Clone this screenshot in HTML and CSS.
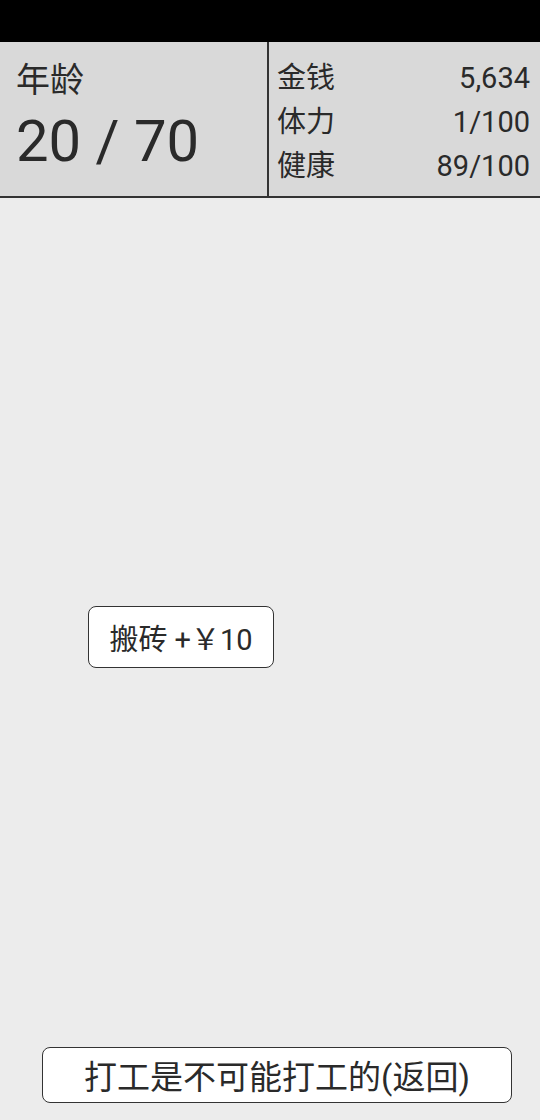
FILE: index.html
```html
<!DOCTYPE html>
<html lang="zh">
<head>
    <meta charset="UTF-8">
    <meta name="viewport" content="width=device-width, initial-scale=1.0">
    <title>打工</title>
    <link rel="stylesheet" href="styles.css">
</head>
<body>
    <div class="top-bar"></div>
    <div class="status">
        <div class="age-cell">
            <div class="age-label">年龄</div>
            <div class="age-value">20 / 70</div>
        </div>
        <div class="stats-cell">
            <div class="stat-row"><span>金钱</span><span>5,634</span></div>
            <div class="stat-row"><span>体力</span><span>1/100</span></div>
            <div class="stat-row"><span>健康</span><span>89/100</span></div>
        </div>
    </div>
    <div class="work-area">
        <button class="work-button">搬砖 +￥10</button>
    </div>
    <button class="back-button">打工是不可能打工的(返回)</button>
</body>
</html>
```

FILE: styles.css
```css
/* Global */
body {
    margin: 0;
    padding: 0;
    height: 1120px;
    display: flex;
    flex-direction: column;
    background-color: #ececec;
    color: #2a2a2a;
    font-family: Roboto, "Noto Sans CJK SC", sans-serif;
    overflow: hidden;
}

.top-bar {
    height: 42px;
    background-color: #000;
}

/* Status panel */
.status {
    display: flex;
    height: 154px;
    background-color: #d9d9d9;
    border-bottom: 2px solid #333;
}

.age-cell {
    width: 269px;
    border-right: 2px solid #333;
    padding: 16px 0 0 16px;
    box-sizing: border-box;
}

.age-label {
    font-size: 34px;
    line-height: 44px;
}

.age-value {
    font-size: 58px;
    line-height: 70px;
    margin-top: 4px;
}

.stats-cell {
    flex: 1;
    padding: 14px 10px 0 8px;
}

.stat-row {
    display: flex;
    justify-content: space-between;
    font-size: 29px;
    line-height: 44px;
}

/* Work area */
.work-area {
    flex: 1;
}

.work-button {
    margin: 408px 0 0 88px;
    width: 186px;
    height: 62px;
    background-color: #fff;
    border: 1.5px solid #333;
    border-radius: 8px;
    font-family: Roboto, "Noto Sans CJK SC", sans-serif;
    font-size: 29px;
    color: #2a2a2a;
    padding: 0;
}

.back-button {
    margin: 0 0 17px 42px;
    width: 470px;
    height: 56px;
    background-color: #fff;
    border: 1.5px solid #333;
    border-radius: 8px;
    font-family: Roboto, "Noto Sans CJK SC", sans-serif;
    font-size: 33px;
    color: #2a2a2a;
    padding: 0;
}
```
